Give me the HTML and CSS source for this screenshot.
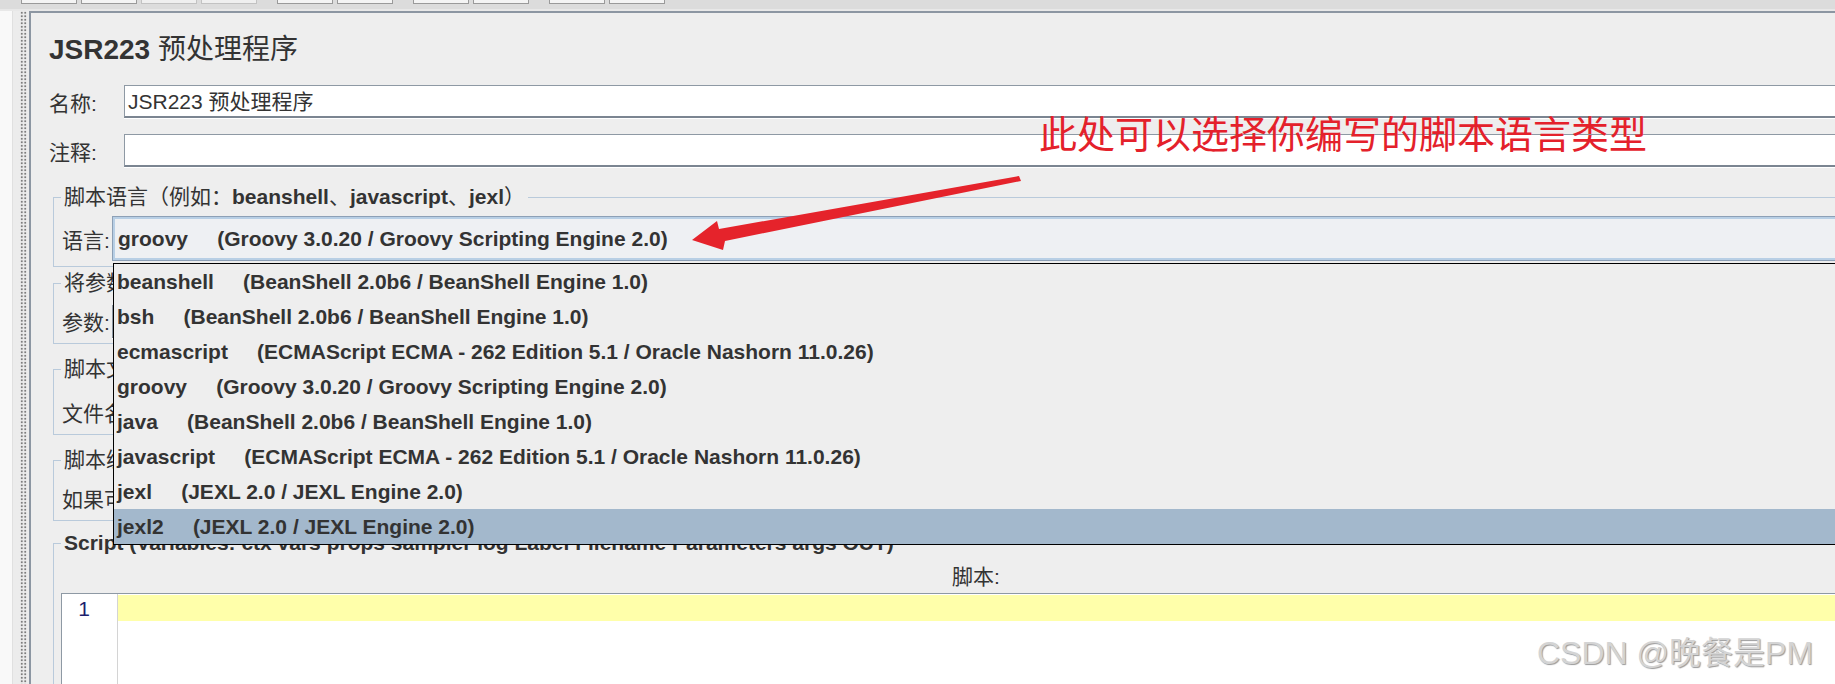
FILE: index.html
```html
<!DOCTYPE html>
<html lang="zh-CN">
<head>
    <meta charset="UTF-8">
    <title>JSR223 预处理程序</title>
    <link rel="stylesheet" href="styles.css">
</head>
<body>

    <!-- toolbar (only the bottom edge is visible) -->
    <div class="toolbar">
        <span class="tool"></span>
        <span class="tool"></span>
        <span class="tool off"></span>
        <span class="tool off"></span>
        <span class="tool sep"></span>
        <span class="tool"></span>
        <span class="tool"></span>
        <span class="tool sep"></span>
        <span class="tool"></span>
        <span class="tool"></span>
        <span class="tool sep"></span>
        <span class="tool"></span>
        <span class="tool"></span>
    </div>

    <div class="main">
        <div class="tree"></div>
        <div class="splitter"><div class="grip"></div></div>

        <div class="panel">
            <h1 class="title">JSR223 <span class="cjk">预处理程序</span></h1>

            <div class="row">
                <label class="label">名称:</label>
                <div class="field">JSR223 预处理程序</div>
            </div>
            <div class="row">
                <label class="label">注释:</label>
                <div class="field"></div>
            </div>

            <fieldset class="group">
                <legend><span class="cjk">脚本语言（例如：</span>beanshell<span class="cjk">、</span>javascript<span class="cjk">、</span>jexl<span class="cjk">）</span></legend>
                <div class="group-row first">
                    <label class="label-sm">语言:</label>
                    <div class="combo">
                        <div class="combo-value">groovy     (Groovy 3.0.20 / Groovy Scripting Engine 2.0)</div>
                        <ul class="popup">
                            <li>beanshell     (BeanShell 2.0b6 / BeanShell Engine 1.0)</li>
                            <li>bsh     (BeanShell 2.0b6 / BeanShell Engine 1.0)</li>
                            <li>ecmascript     (ECMAScript ECMA - 262 Edition 5.1 / Oracle Nashorn 11.0.26)</li>
                            <li>groovy     (Groovy 3.0.20 / Groovy Scripting Engine 2.0)</li>
                            <li>java     (BeanShell 2.0b6 / BeanShell Engine 1.0)</li>
                            <li>javascript     (ECMAScript ECMA - 262 Edition 5.1 / Oracle Nashorn 11.0.26)</li>
                            <li>jexl     (JEXL 2.0 / JEXL Engine 2.0)</li>
                            <li class="selected">jexl2     (JEXL 2.0 / JEXL Engine 2.0)</li>
                        </ul>
                    </div>
                </div>
            </fieldset>

            <fieldset class="group params">
                <legend><span class="cjk">将参数传递给脚本（</span>=&gt; String Parameters and String []args<span class="cjk">）</span></legend>
                <div class="group-row">
                    <label class="label-sm">参数:</label>
                    <div class="field"></div>
                </div>
            </fieldset>

            <fieldset class="group file">
                <legend><span class="cjk">脚本文件（覆盖脚本）</span></legend>
                <div class="group-row">
                    <label class="label-md">文件名</label>
                    <div class="field"></div>
                </div>
            </fieldset>

            <fieldset class="group cache">
                <legend><span class="cjk">脚本编译缓存</span></legend>
                <div class="group-row">
                    <label class="check-label">如果可用，缓存编译脚本</label>
                    <span class="checkbox"></span>
                </div>
            </fieldset>

            <fieldset class="group script">
                <legend>Script (Variables: ctx vars props sampler log Label Filename Parameters args OUT)</legend>
                <div class="script-label">脚本:</div>
                <div class="editor">
                    <div class="gutter">1</div>
                    <div class="code">
                        <div class="current-line"></div>
                    </div>
                </div>
            </fieldset>
        </div>
    </div>

    <!-- annotation on top of the screenshot -->
    <div class="note">此处可以选择你编写的脚本语言类型</div>
    <svg class="arrow" width="1835" height="684" viewBox="0 0 1835 684">
        <polygon points="692,240 717,221 719,229 1019,176 1021,181 725,241 723,250" fill="#e5232b"/>
    </svg>

    <div class="watermark">CSDN @晚餐是PM</div>

</body>
</html>
```

FILE: styles.css
```css
* {
    box-sizing: border-box;
}
body {
    margin: 0;
    width: 1835px;
    height: 684px;
    overflow: hidden;
    position: relative;
    background: #eeeeee;
    font-family: "Liberation Sans", "Noto Sans CJK SC", sans-serif;
    font-size: 21px;
    color: #333;
}
.cjk {
    font-weight: normal;
}

/* toolbar */
.toolbar {
    height: 11px;
    display: flex;
    gap: 4px;
    padding-left: 21px;
    background: #dcdcdc;
    border-bottom: 2px solid #e8e8e8;
}
.tool {
    width: 56px;
    height: 4px;
    background: #f4f4f4;
    border: 1px solid #9a9a9a;
    border-top: none;
}
.tool.off {
    border-color: #c2c2c2;
    background: #efefef;
}
.tool.sep {
    width: 12px;
    border: none;
    background: transparent;
}

.main {
    display: flex;
    height: 673px;
}
.tree {
    width: 13px;
    flex: none;
    background: #f9f9f9;
    border-right: 1px solid #e0e0e0;
}
.splitter {
    width: 16px;
    flex: none;
    padding-left: 7px;
    background: #ececec;
}
.grip {
    width: 7px;
    height: 100%;
    background-image: radial-gradient(circle, #7c7c7c 1px, transparent 1.4px);
    background-size: 3.5px 3.5px;
}

/* main panel */
.panel {
    flex: none;
    width: 1888px;
    padding: 0 18px;
    border-top: 2px solid #8c96a2;
    border-left: 2px solid #8c96a2;
    background: #eeeeee;
}
.title {
    margin: 20px 0 0;
    font-size: 28px;
    line-height: 34px;
    font-weight: bold;
}
.row {
    display: flex;
    align-items: center;
    margin-top: 18px;
}
.row + .row {
    margin-top: 16px;
}
.label {
    width: 75px;
    flex: none;
}
.field {
    flex: 1;
    height: 33px;
    padding-left: 3px;
    line-height: 31px;
    background: #fff;
    border-top: 1px solid #8e99a4;
    border-left: 1px solid #8e99a4;
    border-bottom: 2px solid #7b8591;
    box-shadow: 0 1px 0 #fff;
    white-space: nowrap;
}

/* titled groups */
.group {
    margin: 17px 0 0 4px;
    padding: 0 0 5px;
    min-width: 0;
    border: 1px solid #b9cadb;
}
.group legend {
    margin-left: 7px;
    padding: 0 3px;
    line-height: 26px;
    font-weight: bold;
}
.group-row {
    display: flex;
    align-items: center;
    margin: 8px 0 0 8px;
    height: 34px;
}
.group-row.first {
    margin-top: 6px;
    height: 45px;
}
.label-sm {
    width: 50px;
    flex: none;
}
.label-md {
    width: 75px;
    flex: none;
}
.params {
    margin-top: 3px;
}
.file {
    margin-top: 12px;
}
.file .group-row {
    margin-top: 13px;
}
.cache {
    margin-top: 12px;
}
.script {
    margin-top: 9px;
    padding-bottom: 0;
}
.checkbox {
    width: 18px;
    height: 18px;
    margin-left: 8px;
    border: 1px solid #7a8a99;
    background: #fff;
}

/* combo box + open list */
.combo {
    flex: 1;
    height: 45px;
    position: relative;
    background: #eef0f3;
    border: 1px solid #8da0b6;
    box-shadow: inset 0 0 0 2px #b8cfe5;
}
.combo-value {
    padding-left: 5px;
    line-height: 43px;
    font-weight: bold;
    white-space: pre;
}
.popup {
    position: absolute;
    top: 46px;
    left: 0;
    width: 1800px;
    margin: 0;
    padding: 0;
    list-style: none;
    background: #eeeeee;
    border: 1px solid #000;
    z-index: 2;
}
.popup li {
    height: 35px;
    padding-left: 3px;
    line-height: 35px;
    font-weight: bold;
    white-space: pre;
}
.popup li.selected {
    background: #a3b8cc;
}

/* script editor */
.script-label {
    margin-top: 8px;
    line-height: 26px;
    text-align: center;
}
.editor {
    display: flex;
    height: 120px;
    margin: 3px 0 0 7px;
    background: #fff;
    border-top: 1px solid #8e99a4;
    border-left: 1px solid #8e99a4;
}
.gutter {
    width: 56px;
    flex: none;
    padding: 2px 27px 0 0;
    text-align: right;
    line-height: 26px;
    color: #1c1f6e;
    border-right: 1px solid #d4d4d4;
}
.code {
    flex: 1;
    padding-top: 1px;
}
.current-line {
    height: 26px;
    background: #ffffaa;
}

/* annotation */
.note {
    position: absolute;
    left: 1039px;
    top: 113px;
    font-family: "Noto Sans CJK SC", sans-serif;
    font-size: 38px;
    line-height: 38px;
    color: #e4212b;
    white-space: nowrap;
}
.arrow {
    position: absolute;
    left: 0;
    top: 0;
    pointer-events: none;
}
.watermark {
    position: absolute;
    left: 1537px;
    top: 633px;
    font-size: 32px;
    line-height: 40px;
    color: #d4d4d4;
    text-shadow: 1px 1px 1px #9a9a9a;
    white-space: nowrap;
}
```
